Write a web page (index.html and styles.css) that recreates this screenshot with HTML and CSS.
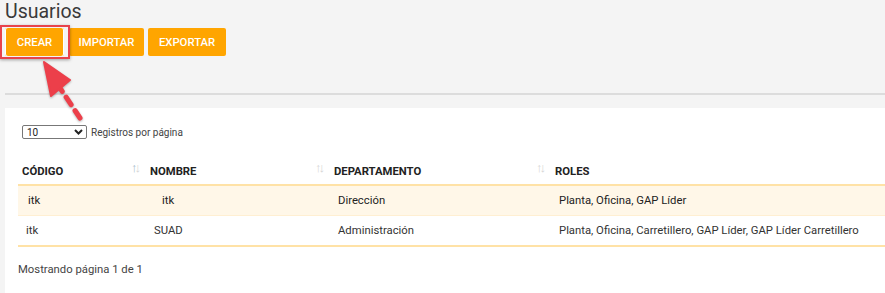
FILE: index.html
```html
<!DOCTYPE html>
<html lang="es">

<head>
  <meta charset="UTF-8" />
  <title>Usuarios</title>
  <link rel="stylesheet" href="styles.css">
</head>

<body>
  <h1 class="page-title">Usuarios</h1>

  <div class="toolbar">
    <button class="btn btn-create">CREAR</button>
    <button class="btn btn-import">IMPORTAR</button>
    <button class="btn btn-export">EXPORTAR</button>
    <span class="highlight"></span>
  </div>

  <!-- red hint arrow pointing at CREAR -->
  <svg class="hint-arrow" width="100" height="130" viewBox="0 0 100 130">
    <line x1="80" y1="118" x2="60" y2="88" stroke="#ec3f4a" stroke-width="5" stroke-linecap="round" stroke-dasharray="9 7" />
    <polygon points="44,62 70,80 51,96" fill="#ec3f4a" stroke="#ec3f4a" stroke-width="2" stroke-linejoin="round" />
  </svg>

  <hr class="divider" />

  <div class="card">
    <div class="length">
      <span class="select">10
        <svg width="9" height="6" viewBox="0 0 9 6"><path d="M1 1 L4.5 4.5 L8 1" fill="none" stroke="#222" stroke-width="2" /></svg>
      </span>
      <span>Registros por página</span>
    </div>

    <table class="grid">
      <thead>
        <tr>
          <th class="col-code">CÓDIGO<span class="sort"><b>↑</b>↓</span></th>
          <th class="col-name">NOMBRE<span class="sort">↑↓</span></th>
          <th class="col-dept">DEPARTAMENTO<span class="sort">↑↓</span></th>
          <th>ROLES</th>
        </tr>
      </thead>
      <tbody>
        <tr class="selected">
          <td><span class="nudge">itk</span></td>
          <td><span class="nudge wide">itk</span></td>
          <td>Dirección</td>
          <td>Planta, Oficina, GAP Líder</td>
        </tr>
        <tr>
          <td>itk</td>
          <td>SUAD</td>
          <td>Administración</td>
          <td>Planta, Oficina, Carretillero, GAP Líder, GAP Líder Carretillero</td>
        </tr>
      </tbody>
    </table>

    <div class="info">Mostrando página 1 de 1</div>
  </div>
</body>

</html>
```

FILE: styles.css
```css
body {
  margin: 0;
  padding: 0 0 0 5px;
  font-family: Roboto, "Liberation Sans", sans-serif;
  background: #f4f4f4;
  color: #333;
  overflow: hidden;
  position: relative;
}

.page-title {
  margin: 0;
  font-size: 19.5px;
  font-weight: 400;
  line-height: 24px;
  color: #3a3a3a;
}

.toolbar {
  position: relative;
  display: flex;
  align-items: center;
  gap: 5px;
  margin-top: 4px;
  height: 28px;
}

.btn {
  height: 28px;
  padding: 0;
  border: 0;
  border-radius: 2px;
  background: #ffa500;
  color: #fff;
  font-family: Roboto, "Liberation Sans", sans-serif;
  font-size: 11.3px;
  font-weight: 500;
}

.btn-create {
  width: 59px;
  box-shadow: inset 1px 0 0 #fff, inset -1px 0 0 #fff;
}

.btn-import { width: 75px; }
.btn-export { width: 78px; margin-left: -1px; }

/* red box drawn round the CREAR button */
.highlight {
  position: absolute;
  left: -5px;
  top: -3px;
  width: 66px;
  height: 30px;
  border: 2px solid #e8434c;
  box-shadow: 0 1px 3px rgba(0, 0, 0, 0.35);
}

.hint-arrow {
  position: absolute;
  left: 0;
  top: 0;
  filter: drop-shadow(0 1px 1px rgba(0, 0, 0, 0.3));
}

.divider {
  margin: 37px 0 0;
  border: 0;
  border-top: 2px solid #dcdcdc;
}

.card {
  margin-top: 13px;
  background: #fff;
  padding: 17px 0 20px 13px;
}

.length {
  display: flex;
  align-items: center;
  gap: 4px;
  margin-left: 4px;
  font-size: 10px;
  color: #444;
}

.select {
  display: flex;
  align-items: center;
  justify-content: space-between;
  width: 56px;
  height: 12px;
  padding: 0 3px 0 4px;
  border: 1px solid #777;
  border-radius: 2px;
  font-size: 10px;
  color: #222;
}

.grid {
  margin-top: 20px;
  width: 880px;
  border-collapse: collapse;
  font-size: 11.3px;
}

.grid th {
  position: relative;
  text-align: left;
  padding: 0 4px;
  height: 25px;
  font-weight: 700;
  color: #222;
  border-bottom: 2px solid #ffe2a6;
}

.col-code { width: 120px; }
.col-name { width: 176px; }
.col-dept { width: 213px; }

.sort {
  position: absolute;
  right: 8px;
  top: 1px;
  font-size: 13px;
  font-weight: 400;
  letter-spacing: -3px;
  color: #d6d6d6;
}

.sort b {
  font-weight: 400;
  color: #a9bccd;
}

.grid td {
  height: 29px;
  padding: 0 8px;
  color: #333;
  border-bottom: 1px solid #ffefd2;
}

.grid tbody tr:last-child td {
  border-bottom: 2px solid #ffe2a6;
}

.selected td {
  background: #fff7e8;
  color: #222;
}

.nudge {
  margin-left: 2px;
}

.nudge.wide {
  margin-left: 8px;
}

.info {
  margin-top: 16px;
  font-size: 11.3px;
  color: #444;
}
```
